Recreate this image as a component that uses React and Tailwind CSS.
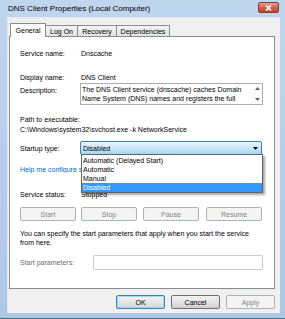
import React from 'react';

const font = "font-['Liberation_Sans',Arial,sans-serif]";

const Tab = ({ label, active, w }) => (
    <div
        className={
            active
                ? `relative z-10 -mb-px flex h-[14px] items-center justify-center border border-b-0 border-[#898c95] bg-white ${w}`
                : `-ml-px flex h-[11px] items-center justify-center border border-b-0 border-[#898c95] bg-gradient-to-b from-[#f3f3f3] to-[#e3e3e3] ${w}`
        }
    >
        <span className="text-[7px] leading-none text-black">{label}</span>
    </div>
);

const SmallButton = ({ label, disabled, isDefault, w = 'w-[56px]' }) => {
    let cls = 'border-[#707070] bg-gradient-to-b from-[#f2f2f2] via-[#e4e4e4] to-[#cfcfcf] text-black';
    if (disabled) cls = 'border-[#adb2b5] bg-[#f4f4f4] text-[#838383]';
    if (isDefault) cls = 'border-[#3c7fb1] bg-gradient-to-b from-[#f2f2f2] via-[#e6e6e6] to-[#d4d4d4] text-black shadow-[inset_0_0_0_1px_#9fd8f5]';
    return (
        <div className={`flex h-[14px] items-center justify-center rounded-[2px] border ${cls} ${w}`}>
            <span className="text-[7px] leading-none">{label}</span>
        </div>
    );
};

export default function App() {
    return (
        <div className={`flex h-[319px] w-[285px] flex-col bg-gradient-to-b from-[#c0d5ee] to-[#aec7e6] ${font}`}>
            {/* title bar */}
            <div className="flex h-[17px] items-center justify-between pl-[8px] pr-[6px]">
                <span className="text-[8px] leading-none text-black">DNS Client Properties (Local Computer)</span>
                <div className="mb-[2px] flex h-[11px] w-[21px] items-center justify-center rounded-[2px] border border-[#8c3a2f] bg-gradient-to-b from-[#e3a393] via-[#cf6350] to-[#c0432d]">
                    <svg width="7" height="6" viewBox="0 0 7 6">
                        <path d="M1 0.5 L6 5.5 M6 0.5 L1 5.5" stroke="white" strokeWidth="1.6" />
                    </svg>
                </div>
            </div>

            {/* client */}
            <div className="flex flex-1 pl-[7px] pr-[5px]">
                <div className="flex flex-1 flex-col border-l border-t border-[#dfe8f3] bg-[#f0f0f0]">
                    {/* tabs */}
                    <div className="flex items-end pl-[2px] pt-[5px]">
                        <Tab label="General" active w="w-[36px]" />
                        <Tab label="Log On" w="w-[33px]" />
                        <Tab label="Recovery" w="w-[40px]" />
                        <Tab label="Dependencies" w="w-[54px]" />
                    </div>

                    {/* panel */}
                    <div className="relative ml-[1px] h-[253px] w-[266px] border border-[#898c95] bg-white pl-[10px]">
                        <div className="mt-[10px] flex h-[12px] items-center text-[7px] leading-none text-black">
                            <span className="w-[61px]">Service name:</span>
                            <span>Dnscache</span>
                        </div>
                        <div className="mt-[12px] flex h-[12px] items-center text-[7px] leading-none text-black">
                            <span className="w-[61px]">Display name:</span>
                            <span>DNS Client</span>
                        </div>
                        <div className="flex h-[22px] items-start text-[7px] leading-none text-black">
                            <span className="mt-[4px] w-[60px]">Description:</span>
                            <div className="flex h-[22px] w-[183px] border border-[#abadb3] bg-white">
                                <div className="flex-1 overflow-hidden pl-[1px] pt-[1px] leading-[9px] whitespace-nowrap">
                                    <div>The DNS Client service (dnscache) caches Domain</div>
                                    <div>Name System (DNS) names and registers the full</div>
                                </div>
                                <div className="flex w-[9px] flex-col items-center justify-between py-[3px]">
                                    <svg width="5" height="3" viewBox="0 0 5 3"><path d="M0 3 L2.5 0 L5 3Z" fill="#606060" /></svg>
                                    <svg width="5" height="3" viewBox="0 0 5 3"><path d="M0 0 L2.5 3 L5 0Z" fill="#606060" /></svg>
                                </div>
                            </div>
                        </div>
                        <div className="mt-[9px] flex h-[10px] items-center text-[7px] leading-none text-black">
                            Path to executable:
                        </div>
                        <div className="flex h-[10px] items-center text-[7px] leading-none text-black">
                            {"C:\\Windows\\system32\\svchost.exe -k NetworkService"}
                        </div>
                        <div className="mt-[7px] flex h-[14px] items-center text-[7px] leading-none text-black">
                            <span className="w-[60px]">Startup type:</span>
                            <div className="flex h-[14px] w-[182px] items-center justify-between rounded-[2px] border border-[#3c7fb1] bg-gradient-to-b from-[#ecf6fd] via-[#c9e7f8] to-[#a6d6f3] pl-[2px] pr-[3px]">
                                <span>Disabled</span>
                                <svg width="5" height="3" viewBox="0 0 5 3"><path d="M0 0 L2.5 3 L5 0Z" fill="#000" /></svg>
                            </div>
                        </div>
                        <div className="mt-[9px] flex h-[10px] items-center text-[7px] leading-none">
                            {/* the open list covers the rest of the link */}
                            <span className="w-[61px] overflow-hidden whitespace-nowrap text-[#0066cc] underline">Help me configure service recovery options.</span>
                        </div>
                        <div className="mt-[15px] flex h-[10px] items-center text-[7px] leading-none text-black">
                            <span className="w-[61px]">Service status:</span>
                            <span>Stopped</span>
                        </div>
                        <div className="mt-[8px] flex">
                            <SmallButton label="Start" disabled />
                            <div className="ml-[5px]"><SmallButton label="Stop" disabled /></div>
                            <div className="ml-[6px]"><SmallButton label="Pause" disabled /></div>
                            <div className="ml-[7px]"><SmallButton label="Resume" disabled /></div>
                        </div>
                        <div className="mt-[8px] text-[7px] leading-[9px] text-black">
                            <div>You can specify the start parameters that apply when you start the service</div>
                            <div>from here.</div>
                        </div>
                        <div className="mt-[8px] flex h-[15px] items-center text-[7px] leading-none text-[#6d6d6d]">
                            <span className="w-[73px]">Start parameters:</span>
                            <div className="h-[15px] w-[170px] rounded-[1px] border border-[#c9cbcf] bg-white" />
                        </div>

                        {/* open dropdown list */}
                        <div className="absolute left-[71px] top-[117px] w-[182px] border border-[#646464] bg-white pt-[1px] text-[7px] leading-none text-black shadow-[2px_2px_2px_rgba(0,0,0,0.35)]">
                            <div className="flex h-[9px] items-center pl-[1px]">Automatic (Delayed Start)</div>
                            <div className="flex h-[9px] items-center pl-[1px]">Automatic</div>
                            <div className="flex h-[9px] items-center pl-[1px]">Manual</div>
                            <div className="flex h-[9px] items-center bg-[#3399ff] pl-[1px] text-white">Disabled</div>
                        </div>
                    </div>

                    {/* footer buttons */}
                    <div className="mt-[6px] flex justify-end gap-[6px] pr-[5px]">
                        <SmallButton label="OK" isDefault w="w-[49px]" />
                        <SmallButton label="Cancel" w="w-[49px]" />
                        <SmallButton label="Apply" disabled w="w-[49px]" />
                    </div>
                </div>
            </div>

            {/* bottom frame */}
            <div className="h-[6px] border-b border-[#3d7a88]" />
        </div>
    );
}
